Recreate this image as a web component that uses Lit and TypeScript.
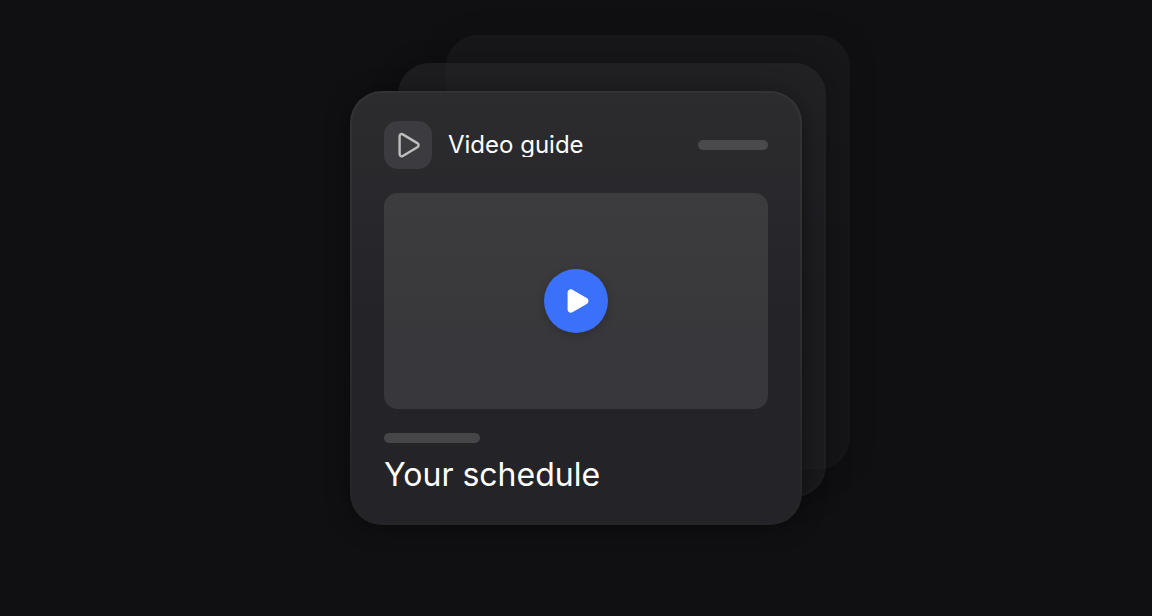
import { LitElement, html, css } from "lit";
import { customElement } from "lit/decorators.js";

@customElement("app-root")
export class AppRoot extends LitElement {
  static styles = css`
    :host {
      display: flex;
      align-items: center;
      justify-content: center;
      min-height: 100vh;
      box-sizing: border-box;
      padding: 56px;
      background: #101012;
      color: #fff;
      font-family: Inter, "Liberation Sans", sans-serif;
    }
    .stack {
      position: relative;
      width: 100%;
      max-width: 452px;
    }
    .card,
    .layer {
      box-sizing: border-box;
      border-radius: 32px;
      border: 2px solid #2c2c2e;
      background: linear-gradient(#2c2b2e, #28272b 28%, #242327 52%, #242327);
      box-shadow: 0 2px 24px rgba(0, 0, 0, 0.4);
    }
    .layer {
      position: absolute;
    }
    .back {
      inset: -56px -48px 56px 96px;
      opacity: 0.28;
    }
    .middle {
      inset: -28px -24px 28px 48px;
      opacity: 0.5;
    }
    .card {
      position: relative;
      padding: 28px 32px;
      border-color: transparent;
      background:
        linear-gradient(#2c2b2e, #28272b 28%, #242327 52%, #242327) padding-box,
        linear-gradient(#333335, #2f2f31 50%, #252427) border-box;
    }
    .header {
      display: flex;
      align-items: center;
      gap: 16px;
    }
    .badge {
      display: grid;
      place-items: center;
      width: 48px;
      height: 48px;
      border-radius: 14px;
      background: #3c3b3f;
    }
    .name {
      flex: 1;
      margin: 0;
      overflow: hidden;
      font-size: 24px;
      line-height: 24px;
      font-weight: 400;
    }
    .line {
      width: 70px;
      height: 10px;
      border-radius: 5px;
      background: #4a4a4c;
    }
    .video {
      display: grid;
      place-items: center;
      height: 216px;
      margin: 24px 0;
      border-radius: 14px;
      background: linear-gradient(#3c3c3e, #3a3a3c 40%, #38373b 65%, #38373b);
    }
    .play {
      display: grid;
      place-items: center;
      width: 64px;
      height: 64px;
      padding: 0;
      border: 0;
      border-radius: 50%;
      background: #3a70fa;
      box-shadow: 0 2px 8px rgba(0, 0, 0, 0.2);
      cursor: pointer;
    }
    .line.wide {
      width: 96px;
      background: #464648;
    }
    .title {
      margin: 16px 0 4px;
      font-size: 32px;
      line-height: 32px;
      font-weight: 400;
    }
    svg {
      display: block;
    }
  `;

  render() {
    return html`
      <main class="stack">
        <div class="layer back"></div>
        <div class="layer middle"></div>
        <article class="card">
          <header class="header">
            <span class="badge">
              <svg width="32" height="32" viewBox="0 0 32 32" fill="none" stroke="#bebebf" stroke-width="2.4" stroke-linejoin="round" aria-hidden="true">
                <path d="M7.6 7.3v17.8c0 1.8 1.6 2.8 3.2 1.9l14.5-8.7c1.7-1 1.7-3.2 0-4.2L10.8 5.4C9.2 4.5 7.6 5.5 7.6 7.3Z" />
              </svg>
            </span>
            <h2 class="name">Video guide</h2>
            <span class="line"></span>
          </header>
          <div class="video">
            <button class="play" type="button" aria-label="Play">
              <svg width="32" height="32" viewBox="0 0 32 32" fill="#fff" aria-hidden="true">
                <path d="M7.6 7.5v17c0 2.6 2.6 4.1 4.8 2.8l14.3-8.3c2.4-1.4 2.4-4.6 0-6L12.4 4.7C10.2 3.4 7.6 4.9 7.6 7.5Z" />
              </svg>
            </button>
          </div>
          <div class="line wide"></div>
          <h1 class="title">Your schedule</h1>
        </article>
      </main>
    `;
  }
}
